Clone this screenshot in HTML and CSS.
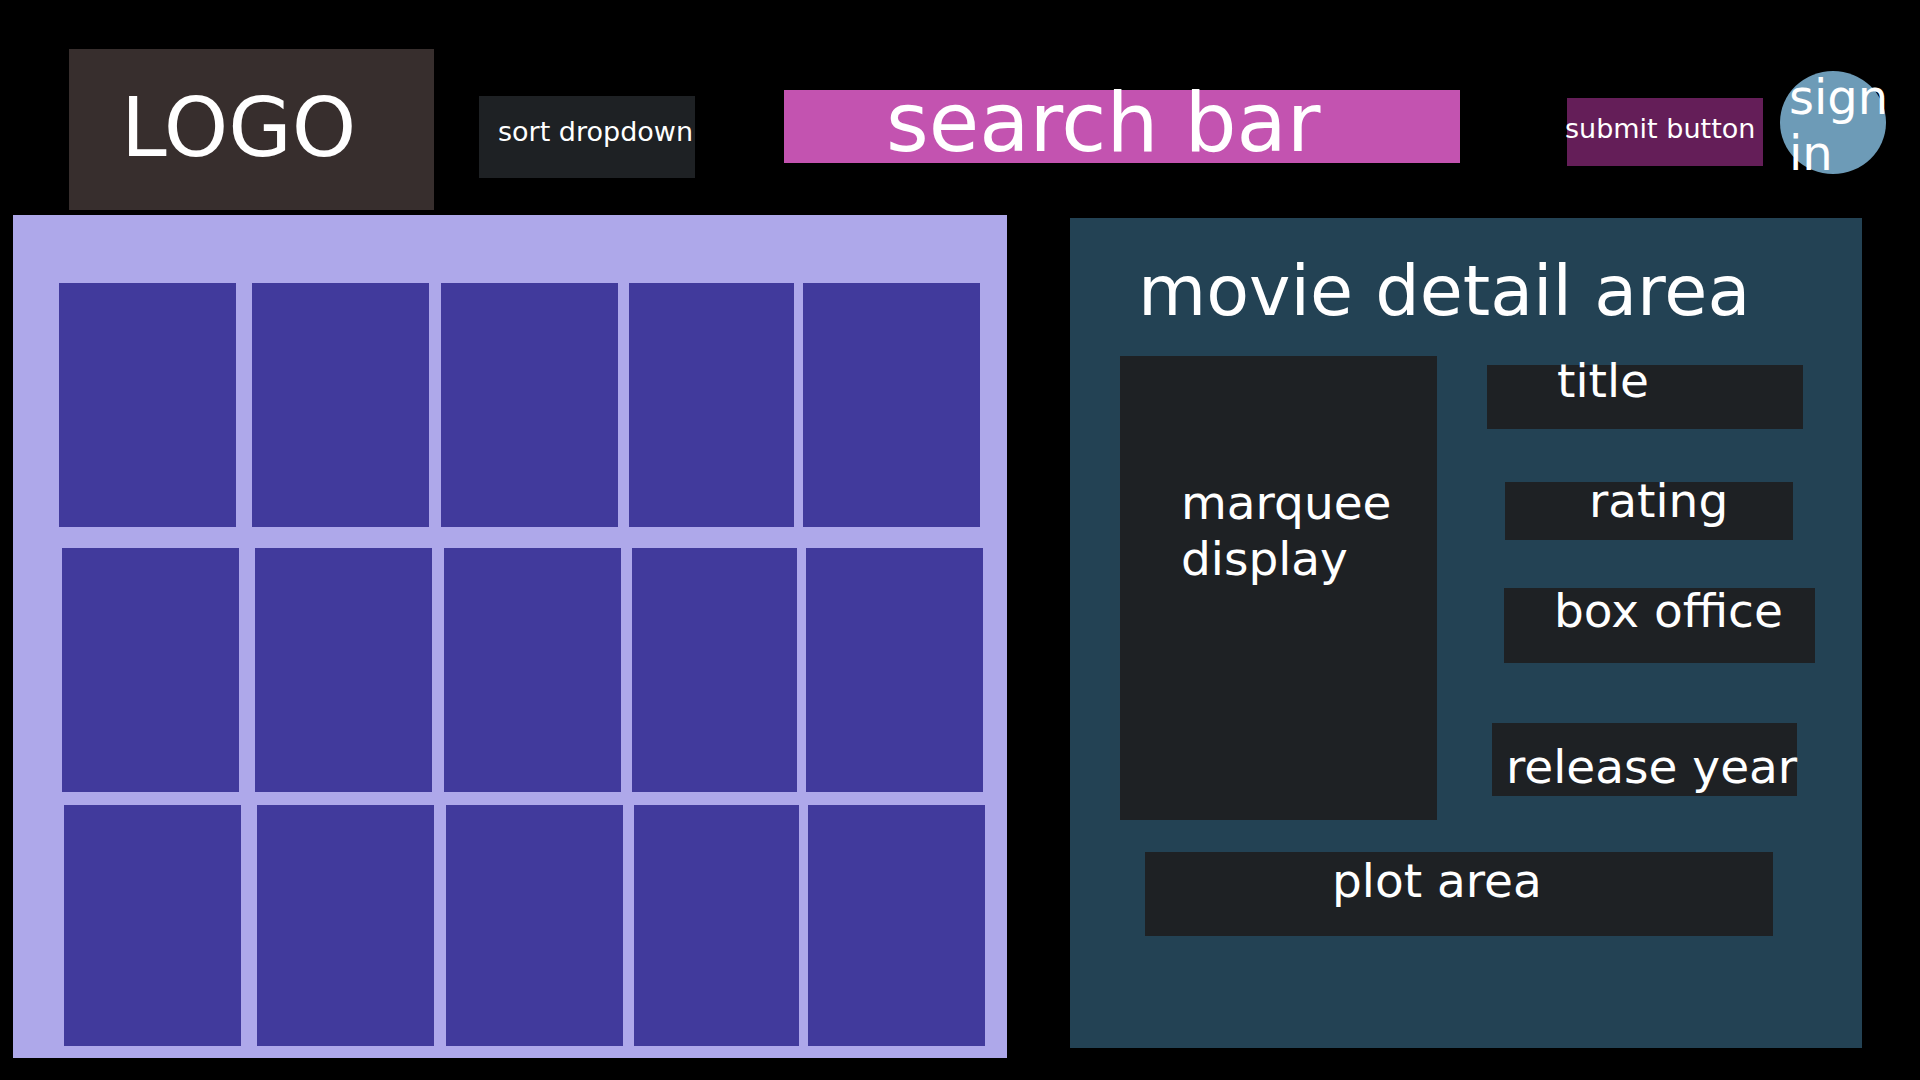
FILE: index.html
```html
<!DOCTYPE html>
<html lang="en">
<head>
<meta charset="utf-8">
<title>Movie wireframe</title>
<link rel="stylesheet" href="styles.css">
</head>
<body>
<header class="top">
  <div class="logo"><span>LOGO</span></div>
  <div class="sort"><span>sort dropdown</span></div>
  <div class="search"><span>search bar</span></div>
  <div class="submit"><span>submit button</span></div>
  <div class="signin"><span>sign in</span></div>
</header>
<main class="main">
  <section class="grid">
    <div class="row row-1">
      <div class="card"></div><div class="card"></div><div class="card"></div><div class="card"></div><div class="card"></div>
    </div>
    <div class="row row-2">
      <div class="card"></div><div class="card"></div><div class="card"></div><div class="card"></div><div class="card"></div>
    </div>
    <div class="row row-3">
      <div class="card"></div><div class="card"></div><div class="card"></div><div class="card"></div><div class="card"></div>
    </div>
  </section>
  <section class="detail">
    <h1 class="detail-heading">movie detail area</h1>
    <div class="detail-body">
      <div class="marquee"><span>marquee display</span></div>
      <div class="facts">
        <div class="fact fact-title"><span>title</span></div>
        <div class="fact fact-rating"><span>rating</span></div>
        <div class="fact fact-box"><span>box office</span></div>
        <div class="fact fact-year"><span>release year</span></div>
      </div>
    </div>
    <div class="plot"><span>plot area</span></div>
  </section>
</main>
</body>
</html>
```
FILE: styles.css
```css
* {
  box-sizing: border-box;
  margin: 0;
  padding: 0;
}

html, body {
  background: #000;
}

body {
  width: 1920px;
  height: 1080px;
  overflow: hidden;
  font-family: "DejaVu Sans", sans-serif;
  color: #fff;
}

/* header */
.top {
  display: flex;
  align-items: flex-start;
  height: 210px;
  padding-left: 69px;
}

.top span {
  white-space: nowrap;
}

.logo {
  margin-top: 49px;
  width: 365px;
  height: 161px;
  background: #372e2d;
  display: flex;
  align-items: flex-start;
  padding-left: 52px;
}

.logo span {
  font-size: 82px;
  line-height: 1;
  margin-top: 38px;
}

.sort {
  margin-left: 45px;
  margin-top: 96px;
  width: 216px;
  height: 82px;
  background: #1e2124;
  display: flex;
  align-items: flex-start;
  padding-left: 19px;
}

.sort span {
  font-size: 27px;
  line-height: 1;
  margin-top: 22px;
}

.search {
  margin-left: 89px;
  margin-top: 90px;
  width: 676px;
  height: 73px;
  background: #c353b0;
  display: flex;
  align-items: flex-start;
  padding-left: 102px;
}

.search span {
  font-size: 82px;
  line-height: 1;
  margin-top: -8px;
}

.submit {
  margin-left: 107px;
  margin-top: 98px;
  width: 196px;
  height: 68px;
  background: #641e58;
  display: flex;
  align-items: flex-start;
}

.submit span {
  font-size: 27px;
  line-height: 1;
  margin-top: 17px;
  margin-left: -2px;
}

.signin {
  margin-left: 17px;
  margin-top: 71px;
  width: 106px;
  height: 103px;
  border-radius: 50%;
  background: #6d9bb7;
  padding: 0 7px 0 9px;
}

.signin span {
  display: block;
  margin-top: -2px;
  font-size: 48px;
  line-height: 56px;
  white-space: normal;
}

/* main */
.main {
  display: flex;
  align-items: flex-start;
}

.grid {
  margin-left: 13px;
  margin-top: 5px;
  width: 994px;
  height: 843px;
  background: #aea8ea;
  padding-top: 68px;
}

.row {
  display: flex;
  height: 244px;
}

.row-1 {
  margin-left: 46px;
}

.row-2 {
  margin-left: 49px;
  margin-top: 21px;
}

.row-3 {
  margin-left: 51px;
  margin-top: 13px;
  height: 241px;
}

.card {
  width: 177px;
  background: #413a9c;
}

.card:nth-child(2) {
  margin-left: 16px;
}

.card:nth-child(3) {
  margin-left: 12px;
}

.card:nth-child(4) {
  margin-left: 11px;
  width: 165px;
}

.card:nth-child(5) {
  margin-left: 9px;
}

/* detail */
.detail {
  margin-left: 63px;
  margin-top: 8px;
  width: 792px;
  height: 830px;
  background: #234254;
}

.detail-heading {
  font-size: 70px;
  font-weight: normal;
  line-height: 1;
  height: 138px;
  padding-top: 38px;
  padding-left: 68px;
  white-space: nowrap;
}

.detail-body {
  display: flex;
  align-items: flex-start;
}

.marquee {
  margin-left: 50px;
  width: 317px;
  height: 464px;
  background: #1e2124;
  padding-top: 119px;
  padding-left: 61px;
}

.marquee span {
  display: block;
  font-size: 47px;
  line-height: 56px;
}

.facts {
  display: flex;
  flex-direction: column;
  align-items: flex-start;
}

.fact {
  display: flex;
  align-items: flex-start;
  background: #1e2124;
}

.fact span,
.plot span {
  font-size: 47px;
  line-height: 1;
  white-space: nowrap;
}

.fact-title {
  margin: 9px 0 0 50px;
  width: 316px;
  height: 64px;
  padding-left: 70px;
}

.fact-title span {
  margin-top: -8px;
}

.fact-rating {
  margin: 53px 0 0 68px;
  width: 288px;
  height: 58px;
  padding-left: 84px;
}

.fact-rating span {
  margin-top: -5px;
}

.fact-box {
  margin: 48px 0 0 67px;
  width: 311px;
  height: 75px;
  padding-left: 50px;
}

.fact-box span {
  margin-top: -1px;
}

.fact-year {
  margin: 60px 0 0 55px;
  width: 305px;
  height: 73px;
  padding-left: 14px;
}

.fact-year span {
  margin-top: 20px;
}

.plot {
  display: flex;
  align-items: flex-start;
  margin: 32px 0 0 75px;
  width: 628px;
  height: 84px;
  background: #1e2124;
  padding-left: 187px;
}

.plot span {
  margin-top: 5px;
}
```
